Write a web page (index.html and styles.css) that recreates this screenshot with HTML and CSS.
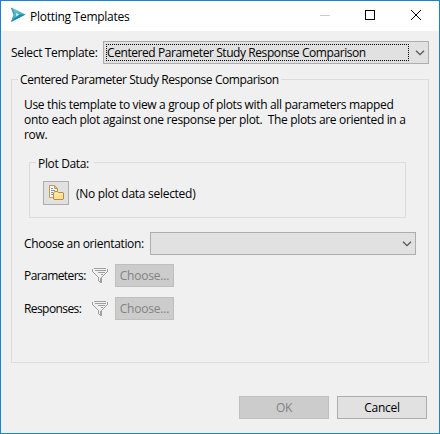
FILE: index.html
```html
<!DOCTYPE html>
<html lang="en">
<head>
<meta charset="utf-8">
<title>Plotting Templates</title>
<link rel="stylesheet" href="styles.css">
</head>
<body>
<div class="window">
  <header class="titlebar">
    <svg class="logo" width="16" height="16" viewBox="0 0 16 16">
      <path d="M1 .5 15.500 7.500 1 15 4.500 8z" fill="#3fb4cb"/>
      <path d="M1 .5 9 4.400 5 5z" fill="#6fbccb"/>
      <path d="M1 15 15.500 7.500H10L4.500 11z" fill="#168ba8"/>
      <path d="M5.500 5.500 9 7.500 5.500 10 6.500 8z" fill="#d9f3f6"/>
      <path d="M1.500 1 4 8 1.500 14.500" fill="none" stroke="#3f8fa0"/>
    </svg>
    <h1 class="title">Plotting Templates</h1>
    <svg class="controls" width="103" height="12" viewBox="0 0 103 12" shape-rendering="crispEdges">
      <path d="M1 6.500h10" stroke="#ccc"/>
      <path d="M46.500 1.500h9v9h-9z" fill="none" stroke="#000"/>
      <path d="M92 1l10 10M102 1l-10 10" stroke="#000" shape-rendering="auto"/>
    </svg>
  </header>
  <main class="content">
    <div class="template-row">
      <span class="label select-label">Select Template:</span>
      <div class="combo focused">
        <span class="combo-value">Centered Parameter Study Response Comparison</span>
        <svg class="chevron" width="10" height="6" viewBox="0 0 10 6"><path d="M1 .7l4 4 4-4" fill="none" stroke="#555" stroke-width="1.3"/></svg>
      </div>
    </div>
    <section class="group">
      <h2 class="legend main-legend">Centered Parameter Study Response Comparison</h2>
      <div class="description">
        <div class="line1">Use this template to view a group of plots with all parameters mapped</div>
        <div class="line2">onto each plot against one response per plot.&nbsp; The plots are oriented in a</div>
        <div class="line3">row.</div>
      </div>
      <section class="group plot-data">
        <h2 class="legend data-legend">Plot Data:</h2>
        <div class="button icon-button">
          <svg width="16" height="16" viewBox="0 0 16 16">
            <path d="M1.500 .5h5l3 3v9h-8z" fill="#f5f7fb" stroke="#c19a4b"/>
            <path d="M6.500 .5v3h3z" fill="#efd28b" stroke="#c19a4b"/>
            <path d="M3 3.500h2M3 5.500h4M3 7.500h2M3 9.500h2" stroke="#7b94bd"/>
            <path d="M5.500 14V8l1-1.500h3l1 1H15l.5.5v6l-.5.5H6z" fill="#ffdf92" stroke="#c08a35"/>
            <path d="M6.500 9h8" stroke="#fff2c8"/>
          </svg>
        </div>
        <span class="label no-data">(No plot data selected)</span>
      </section>
      <div class="orientation-row">
        <span class="label orientation-label">Choose an orientation:</span>
        <div class="combo">
          <svg class="chevron" width="10" height="6" viewBox="0 0 10 6"><path d="M1 .7l4 4 4-4" fill="none" stroke="#555" stroke-width="1.3"/></svg>
        </div>
      </div>
      <div class="filter-row">
        <span class="label params-label">Parameters:</span>
        <svg class="funnel" width="16" height="16" viewBox="0 0 16 16" fill="none" stroke="#a0a0a0" shape-rendering="crispEdges">
          <path d="M2 .5h12M.500 1v3M15.500 1v3M3 2.500h11M6 4.500h7M9 6.500h2M1 4.500h1M2 5.500h1M3 6.500h1M4 7.500h1M5 8.500h1M6 9.500h1M14 4.500h1M13 5.500h1M12 6.500h1M11 7.500h1M10 8.500h1M9 9.500h1M6.500 10v3M9.500 9v6M8.500 10v5M7 13.500h2"/>
        </svg>
        <div class="button disabled choose">Choose...</div>
      </div>
      <div class="filter-row">
        <span class="label responses-label">Responses:</span>
        <svg class="funnel" width="16" height="16" viewBox="0 0 16 16" fill="none" stroke="#a0a0a0" shape-rendering="crispEdges">
          <path d="M2 .5h12M.500 1v3M15.500 1v3M3 2.500h11M6 4.500h7M9 6.500h2M1 4.500h1M2 5.500h1M3 6.500h1M4 7.500h1M5 8.500h1M6 9.500h1M14 4.500h1M13 5.500h1M12 6.500h1M11 7.500h1M10 8.500h1M9 9.500h1M6.500 10v3M9.500 9v6M8.500 10v5M7 13.500h2"/>
        </svg>
        <div class="button disabled choose">Choose...</div>
      </div>
    </section>
    <footer class="actions">
      <div class="button disabled action ok">OK</div>
      <div class="button action cancel">Cancel</div>
    </footer>
  </main>
</div>
</body>
</html>
```
FILE: styles.css
```css
* { box-sizing: border-box; }
body {
  margin: 0;
  font: 12px/15px "Open Sans", "Noto Sans", sans-serif;
  letter-spacing: -.34px;
  color: #000;
}
h1, h2 { margin: 0; font-size: inherit; font-weight: inherit; }
svg { display: block; flex: none; }
.window {
  width: 440px;
  height: 434px;
  border: 1px solid #1883d7;
  background: #f0f0f0;
  white-space: nowrap;
}
.titlebar {
  display: flex;
  height: 30px;
  background: #fff;
  padding: 6px 17px 0 9px;
}
.title { margin: 2px 0 0 4px; letter-spacing: -.27px; }
.controls { margin: 2px 0 0 auto; }
.content { padding: 10px; }
.template-row { display: flex; height: 23px; align-items: center; }
.select-label { width: 91px; }
.combo {
  display: flex;
  align-items: center;
  flex: none;
  width: 266px;
  height: 23px;
  border: 1px solid #adadad;
  background: #e1e1e1;
}
.combo.focused { width: 326px; margin-left: 1px; }
.combo-value {
  width: 303px;
  height: 17px;
  margin-left: 2px;
  border: 1px dotted #000;
  line-height: 15px;
  letter-spacing: -.42px;
}
.chevron { margin: 1px 3px 0 auto; }
.group { border: 1px solid #dcdcdc; }
.content > .group { width: 418px; height: 284px; margin: 15px 0 0; padding-left: 12px; }
.legend {
  width: max-content;
  height: 15px;
  padding: 0 2px;
  background: #f0f0f0;
  line-height: 15px;
}
.main-legend { margin: -8px 0 0 -6px; letter-spacing: -.42px; }
.description { height: 45px; margin-top: 10px; }
.plot-data {
  display: grid;
  grid-template-columns: 26px auto;
  grid-template-rows: 18px 24px;
  justify-content: start;
  column-gap: 7px;
  align-items: center;
  width: 377px;
  height: 56px;
  margin: 20px 0 0 5px;
  padding-left: 13px;
}
.data-legend { grid-column: 1 / -1; align-self: start; margin: -7px 0 0 -7px; padding-right: 5px; }
.no-data { letter-spacing: -.28px; }
.button {
  display: flex;
  align-items: center;
  justify-content: center;
  height: 23px;
  border: 1px solid #adadad;
  background: #e1e1e1;
}
.button.disabled { border-color: #bfbfbf; background: #ccc; color: #838383; }
.button.icon-button { height: 24px; }
.orientation-row { display: flex; align-items: center; margin-top: 14px; }
.orientation-label { width: 126px; letter-spacing: -.34px; }
.filter-row { display: flex; height: 23px; align-items: center; margin-top: 10px; }
.orientation-row + .filter-row { margin-top: 9px; }
.filter-row .label { width: 68px; letter-spacing: -.58px; }
.choose { width: 59px; margin-left: 7px; letter-spacing: -.2px; }
.actions { display: flex; justify-content: flex-end; gap: 8px; margin: 33px 2px 0 0; }
.action { width: 90px; letter-spacing: -.25px; }
```
